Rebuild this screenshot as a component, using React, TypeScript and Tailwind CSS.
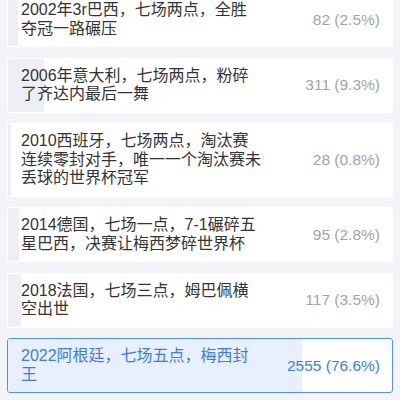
const options = [
  { text: "2002年3r巴西，七场两点，全胜夺冠一路碾压", votes: 82, pct: 2.5 },
  { text: "2006年意大利，七场两点，粉碎了齐达内最后一舞", votes: 311, pct: 9.3 },
  { text: "2010西班牙，七场两点，淘汰赛连续零封对手，唯一一个淘汰赛未丢球的世界杯冠军", votes: 28, pct: 0.8 },
  { text: "2014德国，七场一点，7-1碾碎五星巴西，决赛让梅西梦碎世界杯", votes: 95, pct: 2.8 },
  { text: "2018法国，七场三点，姆巴佩横空出世", votes: 117, pct: 3.5 },
  { text: "2022阿根廷，七场五点，梅西封王", votes: 2555, pct: 76.6, chosen: true },
];

function OptionRow({ text, votes, pct, chosen }: { text: string; votes: number; pct: number; chosen?: boolean }) {
  return (
    <div
      className={`relative overflow-hidden rounded-[3px] bg-white ${
        chosen ? "border border-[#4f8ef3]" : "border border-transparent"
      }`}
    >
      {/* vote share bar */}
      <div
        className={`absolute inset-y-0 left-0 ${chosen ? "bg-[#e8effd]" : "bg-[#eeeff4]"}`}
        style={{ width: `${pct}%` }}
      />
      <div className="relative flex items-center justify-between pl-[13px] pr-[12px] py-[8px]">
        <div
          className={`w-[241px] text-[16px] leading-[18.5px] ${chosen ? "text-[#3d7ce6]" : "text-[#333333]"}`}
        >
          {text}
        </div>
        <div className={`text-[15.5px] ${chosen ? "text-[#3d7ce6]" : "text-[#9ea3b0]"}`}>
          {votes} ({pct}%)
        </div>
      </div>
    </div>
  );
}

export default function App() {
  return (
    <div
      className="h-[400px] overflow-hidden bg-[#f3f4f8]"
      style={{ fontFamily: '"Liberation Sans", "Noto Sans CJK SC", sans-serif' }}
    >
      <div className="-mt-[8px] flex flex-col gap-[10.5px] px-[7px]">
        {options.map((o) => (
          <OptionRow key={o.votes} {...o} />
        ))}
      </div>
    </div>
  );
}
